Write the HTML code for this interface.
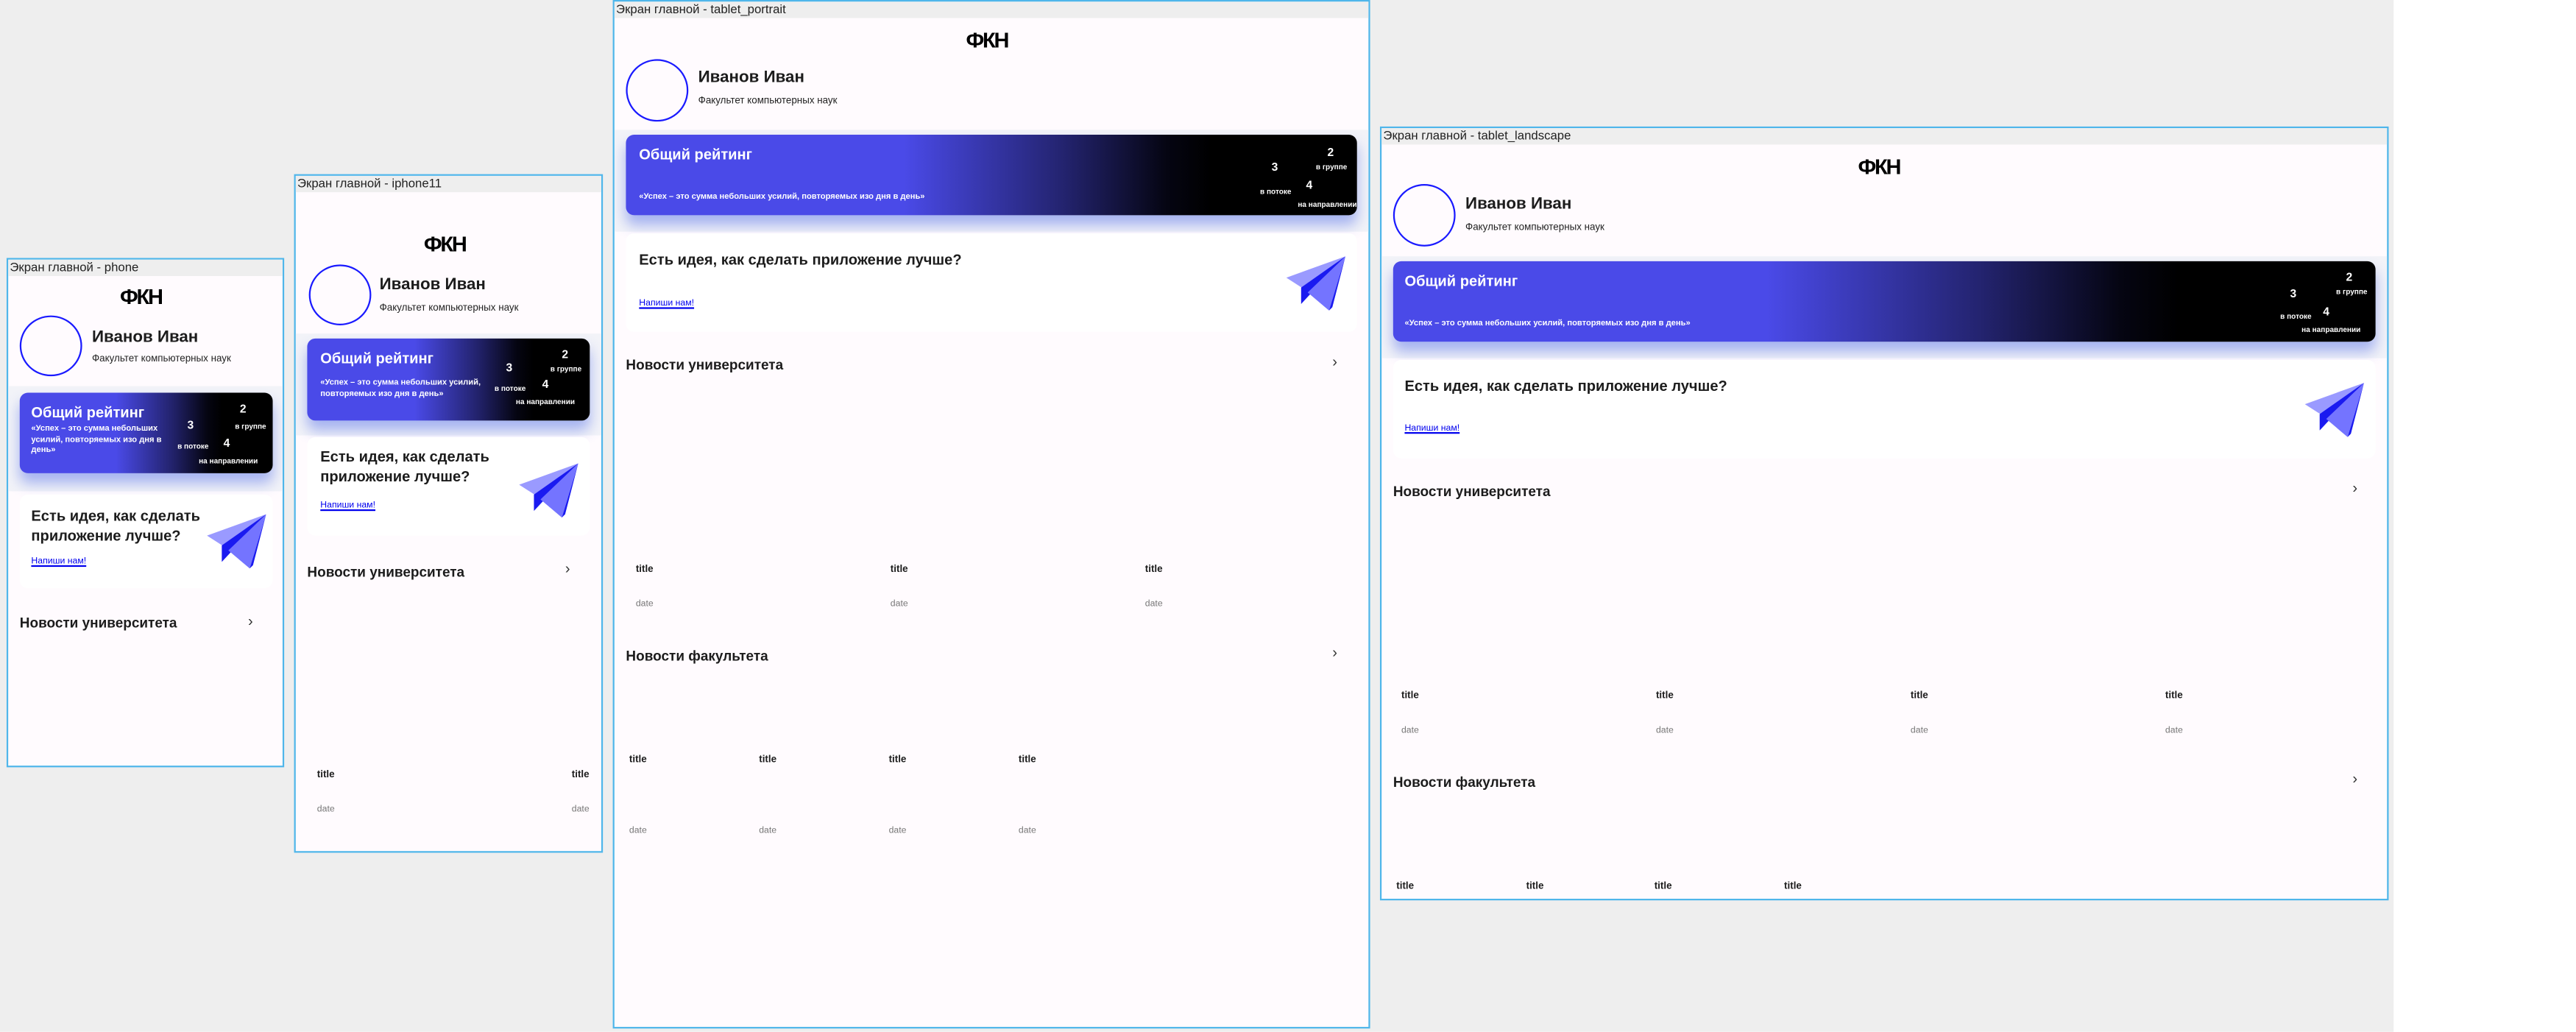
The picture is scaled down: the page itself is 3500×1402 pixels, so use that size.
<!DOCTYPE html>
<html><head><meta charset="utf-8"><style>
*{margin:0;padding:0;box-sizing:border-box}
html,body{width:3500px;height:1400px;overflow:hidden;background:#fff}
#s{position:absolute;left:0;top:0;width:1568px;height:628px;transform:scale(2.2321);transform-origin:0 0;font-family:"Liberation Sans",sans-serif}
.bg{position:absolute;left:0;top:0;width:1457px;height:628px;background:#eeeeee}
.f{position:absolute;background:#fffbfe;border:1px solid #4fb6ea;overflow:hidden}
.lb{position:absolute;left:0;top:0;right:0;height:10px;background:#eeeeee;font-size:7.5px;line-height:10px;color:#222;padding-left:1px;white-space:nowrap}
.t{position:absolute;white-space:nowrap;line-height:1}
.logo{font-weight:bold;font-size:13px;letter-spacing:-1px;color:#000}
.av{position:absolute;border:1px solid #1a1aff;border-radius:50%}
.nm{font-weight:bold;font-size:10px;color:#1c1c1c}
.fc{font-size:6px;color:#222}
.band{position:absolute;left:0;right:0;background:#f2f3f8}
.card{position:absolute;border-radius:5px;background:linear-gradient(90deg,#4a4ae8 0%,#4a4ae8 38%,#23236e 60%,#050512 74%,#000 80%);box-shadow:0 6px 8px rgba(70,100,230,.45)}
.rt{font-weight:bold;font-size:9px;color:#fff}
.q{font-weight:bold;font-size:5px;color:#fff;line-height:1.3}
.n{font-weight:bold;font-size:7px;color:#fff}
.nl{font-size:4.5px;color:#fff;font-weight:bold}
.idea{position:absolute;background:#fff;border-radius:5px}
.it{font-weight:bold;font-size:9px;color:#1c1c1c;line-height:1.35}
.lk{font-size:5.5px;color:#0000ee;text-decoration:underline}
.nw{font-size:8.5px;color:#1c1c1c;font-weight:bold}
.ch{font-size:9px;color:#333}
.ti{font-size:6px;color:#1c1c1c;font-weight:bold}
.dt{font-size:5.5px;color:#777}
svg.pl{position:absolute}
</style></head><body><div id="s">
<div class="bg"></div>

<!-- phone -->
<div class="f" style="left:4px;top:157px;width:169px;height:310px">
<div class="lb">Экран главной - phone</div>
<div class="t logo" style="left:68px;top:16px">ФКН</div>
<div class="av" style="left:7px;top:34px;width:38px;height:37px"></div>
<div class="t nm" style="left:51px;top:43px">Иванов Иван</div>
<div class="t fc" style="left:51px;top:58px">Факультет компьютерных наук</div>
<div class="band" style="top:77px;height:64px"></div>
<div class="card" style="left:7px;top:81px;width:154px;height:49px">
 <div class="t rt" style="left:7px;top:8px">Общий рейтинг</div>
 <div class="t q" style="left:7px;top:19px">«Успех – это сумма небольших<br>усилий, повторяемых изо дня в<br>день»</div>
 <div class="t n" style="left:134px;top:7px">2</div><div class="t nl" style="left:131px;top:19px">в группе</div>
 <div class="t n" style="left:102px;top:17px">3</div><div class="t nl" style="left:96px;top:31px">в потоке</div>
 <div class="t n" style="left:124px;top:28px">4</div><div class="t nl" style="left:109px;top:40px">на направлении</div>
</div>
<div class="idea" style="left:7px;top:143px;width:154px;height:57px">
 <div class="t it" style="left:7px;top:7px">Есть идея, как сделать<br>приложение лучше?</div>
 <div class="t lk" style="left:7px;top:39px">Напиши нам!</div>
</div>
<svg class="pl" style="left:121px;top:155px" width="36" height="33" viewBox="0 0 36 33"><polygon points="0,13 36,0 14,22" fill="#9a9aff"/><polygon points="36,0 9,19 9,29" fill="#1a1af0"/><polygon points="36,0 13,22 26,33" fill="#7474ff"/><polygon points="36,0 26,33 28,31" fill="#1a1af0"/></svg>
<div class="t nw" style="left:7px;top:217px">Новости университета</div>
<div class="t ch" style="left:146px;top:216px">›</div>
</div>

<!-- iphone11 -->
<div class="f" style="left:179px;top:106px;width:188px;height:413px">
<div class="lb">Экран главной - iphone11</div>
<div class="t logo" style="left:78px;top:35px">ФКН</div>
<div class="av" style="left:8px;top:54px;width:38px;height:37px"></div>
<div class="t nm" style="left:51px;top:62px">Иванов Иван</div>
<div class="t fc" style="left:51px;top:78px">Факультет компьютерных наук</div>
<div class="band" style="top:96px;height:62px"></div>
<div class="card" style="left:7px;top:99px;width:172px;height:50px">
 <div class="t rt" style="left:8px;top:8px">Общий рейтинг</div>
 <div class="t q" style="left:8px;top:24px">«Успех – это сумма небольших усилий,<br>повторяемых изо дня в день»</div>
 <div class="t n" style="left:155px;top:7px">2</div><div class="t nl" style="left:148px;top:17px">в группе</div>
 <div class="t n" style="left:121px;top:15px">3</div><div class="t nl" style="left:114px;top:29px">в потоке</div>
 <div class="t n" style="left:143px;top:25px">4</div><div class="t nl" style="left:127px;top:37px">на направлении</div>
</div>
<div class="idea" style="left:7px;top:159px;width:172px;height:60px">
 <div class="t it" style="left:8px;top:6px">Есть идея, как сделать<br>приложение лучше?</div>
 <div class="t lk" style="left:8px;top:40px">Напиши нам!</div>
</div>
<svg class="pl" style="left:136px;top:175px" width="36" height="33" viewBox="0 0 36 33"><polygon points="0,13 36,0 14,22" fill="#9a9aff"/><polygon points="36,0 9,19 9,29" fill="#1a1af0"/><polygon points="36,0 13,22 26,33" fill="#7474ff"/><polygon points="36,0 26,33 28,31" fill="#1a1af0"/></svg>
<div class="t nw" style="left:7px;top:237px">Новости университета</div>
<div class="t ch" style="left:164px;top:235px">›</div>
<div class="t ti" style="left:13px;top:362px">title</div><div class="t ti" style="left:168px;top:362px">title</div>
<div class="t dt" style="left:13px;top:384px">date</div><div class="t dt" style="left:168px;top:384px">date</div>
</div>

<!-- tablet portrait -->
<div class="f" style="left:373px;top:0;width:461px;height:626px">
<div class="lb">Экран главной - tablet_portrait</div>
<div class="t logo" style="left:214px;top:17px">ФКН</div>
<div class="av" style="left:7px;top:35px;width:38px;height:38px"></div>
<div class="t nm" style="left:51px;top:42px">Иванов Иван</div>
<div class="t fc" style="left:51px;top:58px">Факультет компьютерных наук</div>
<div class="band" style="top:78px;height:62px"></div>
<div class="card" style="left:7px;top:81px;width:445px;height:49px">
 <div class="t rt" style="left:8px;top:8px">Общий рейтинг</div>
 <div class="t q" style="left:8px;top:35px">«Успех – это сумма небольших усилий, повторяемых изо дня в день»</div>
 <div class="t n" style="left:427px;top:8px">2</div><div class="t nl" style="left:420px;top:18px">в группе</div>
 <div class="t n" style="left:393px;top:17px">3</div><div class="t nl" style="left:386px;top:33px">в потоке</div>
 <div class="t n" style="left:414px;top:28px">4</div><div class="t nl" style="left:409px;top:41px">на направлении</div>
</div>
<div class="idea" style="left:7px;top:141px;width:445px;height:60px">
 <div class="t it" style="left:8px;top:10px">Есть идея, как сделать приложение лучше?</div>
 <div class="t lk" style="left:8px;top:41px">Напиши нам!</div>
</div>
<svg class="pl" style="left:409px;top:155px" width="36" height="33" viewBox="0 0 36 33"><polygon points="0,13 36,0 14,22" fill="#9a9aff"/><polygon points="36,0 9,19 9,29" fill="#1a1af0"/><polygon points="36,0 13,22 26,33" fill="#7474ff"/><polygon points="36,0 26,33 28,31" fill="#1a1af0"/></svg>
<div class="t nw" style="left:7px;top:217px">Новости университета</div>
<div class="t ch" style="left:437px;top:215px">›</div>
<div class="t ti" style="left:13px;top:343px">title</div><div class="t ti" style="left:168px;top:343px">title</div><div class="t ti" style="left:323px;top:343px">title</div>
<div class="t dt" style="left:13px;top:365px">date</div><div class="t dt" style="left:168px;top:365px">date</div><div class="t dt" style="left:323px;top:365px">date</div>
<div class="t nw" style="left:7px;top:394px">Новости факультета</div>
<div class="t ch" style="left:437px;top:392px">›</div>
<div class="t ti" style="left:9px;top:459px">title</div><div class="t ti" style="left:88px;top:459px">title</div><div class="t ti" style="left:167px;top:459px">title</div><div class="t ti" style="left:246px;top:459px">title</div>
<div class="t dt" style="left:9px;top:503px">date</div><div class="t dt" style="left:88px;top:503px">date</div><div class="t dt" style="left:167px;top:503px">date</div><div class="t dt" style="left:246px;top:503px">date</div>
</div>

<!-- tablet landscape -->
<div class="f" style="left:840px;top:77px;width:614px;height:471px">
<div class="lb">Экран главной - tablet_landscape</div>
<div class="t logo" style="left:290px;top:17px">ФКН</div>
<div class="av" style="left:7px;top:34px;width:38px;height:38px"></div>
<div class="t nm" style="left:51px;top:42px">Иванов Иван</div>
<div class="t fc" style="left:51px;top:58px">Факультет компьютерных наук</div>
<div class="band" style="top:78px;height:62px"></div>
<div class="card" style="left:7px;top:81px;width:598px;height:49px">
 <div class="t rt" style="left:7px;top:8px">Общий рейтинг</div>
 <div class="t q" style="left:7px;top:35px">«Успех – это сумма небольших усилий, повторяемых изо дня в день»</div>
 <div class="t n" style="left:580px;top:7px">2</div><div class="t nl" style="left:574px;top:17px">в группе</div>
 <div class="t n" style="left:546px;top:17px">3</div><div class="t nl" style="left:540px;top:32px">в потоке</div>
 <div class="t n" style="left:566px;top:28px">4</div><div class="t nl" style="left:553px;top:40px">на направлении</div>
</div>
<div class="idea" style="left:7px;top:141px;width:598px;height:60px">
 <div class="t it" style="left:7px;top:10px">Есть идея, как сделать приложение лучше?</div>
 <div class="t lk" style="left:7px;top:40px">Напиши нам!</div>
</div>
<svg class="pl" style="left:562px;top:155px" width="36" height="33" viewBox="0 0 36 33"><polygon points="0,13 36,0 14,22" fill="#9a9aff"/><polygon points="36,0 9,19 9,29" fill="#1a1af0"/><polygon points="36,0 13,22 26,33" fill="#7474ff"/><polygon points="36,0 26,33 28,31" fill="#1a1af0"/></svg>
<div class="t nw" style="left:7px;top:217px">Новости университета</div>
<div class="t ch" style="left:591px;top:215px">›</div>
<div class="t ti" style="left:12px;top:343px">title</div><div class="t ti" style="left:167px;top:343px">title</div><div class="t ti" style="left:322px;top:343px">title</div><div class="t ti" style="left:477px;top:343px">title</div>
<div class="t dt" style="left:12px;top:365px">date</div><div class="t dt" style="left:167px;top:365px">date</div><div class="t dt" style="left:322px;top:365px">date</div><div class="t dt" style="left:477px;top:365px">date</div>
<div class="t nw" style="left:7px;top:394px">Новости факультета</div>
<div class="t ch" style="left:591px;top:392px">›</div>
<div class="t ti" style="left:9px;top:459px">title</div><div class="t ti" style="left:88px;top:459px">title</div><div class="t ti" style="left:166px;top:459px">title</div><div class="t ti" style="left:245px;top:459px">title</div>
</div>

</div></body></html>
